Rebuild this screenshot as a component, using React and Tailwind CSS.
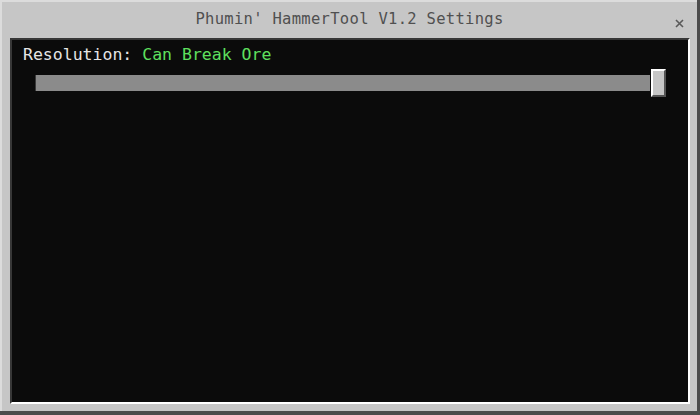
export default function App() {
  return (
    <div className="w-[700px] h-[415px] bg-[#4c4c4c] overflow-hidden" style={{ fontFamily: '"DejaVu Sans Mono", "Liberation Mono", monospace' }}>
      <div className="w-[697px] h-[411px] bg-[#c6c6c6] border-t-2 border-l-2 border-[#dcdcdc] flex flex-col">
        {/* Title bar */}
        <div className="relative h-[36px] flex items-center justify-center">
          <span className="text-[15.5px] leading-none text-[#505050] tracking-[0.3px]">Phumin' HammerTool V1.2 Settings</span>
          <svg className="absolute right-[13px] top-[17px]" width="9" height="9" viewBox="0 0 9 9">
            <path d="M1 1 L8 8 M8 1 L1 8" stroke="#5a5a5a" strokeWidth="1.6" />
          </svg>
        </div>
        {/* Content panel */}
        <div className="ml-[8px] mr-[7px] mb-[7px] flex-1 border-t-2 border-l-2 border-[#373737] border-b-2 border-r-2 border-b-[#ffffff] border-r-[#ffffff] bg-[#0b0b0b]">
          <div className="pl-[11px] pt-[5px] text-[16.5px] leading-[20px]">
            <span className="text-[#e6e6e6]">Resolution: </span>
            <span className="text-[#5fe05f]">Can Break Ore</span>
          </div>
          <div className="flex items-center pl-[23px] pr-[22px] mt-[4px] h-[28px]">
            <div className="flex-1 h-[16px] bg-[#8b8b8b] border-l border-[#3a3a3a]"></div>
            <div className="ml-[1px] w-[15px] h-[28px] bg-[#c6c6c6] border-t-2 border-l-2 border-[#ffffff] border-b-2 border-r-2 border-b-[#555555] border-r-[#555555]"></div>
          </div>
        </div>
      </div>
    </div>
  );
}
